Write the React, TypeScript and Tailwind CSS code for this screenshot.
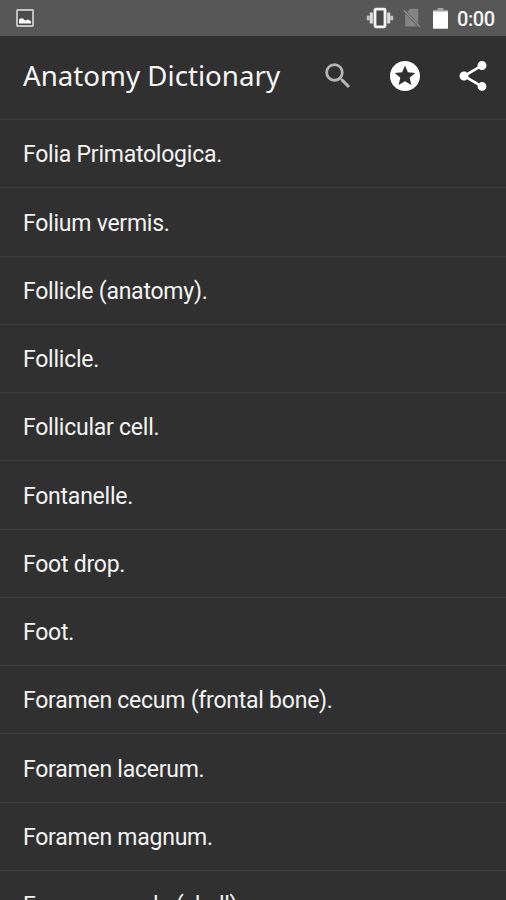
import React from "react";
import { MdSearch, MdShare, MdStars } from "react-icons/md";

const entries = [
  "Folia Primatologica.",
  "Folium vermis.",
  "Follicle (anatomy).",
  "Follicle.",
  "Follicular cell.",
  "Fontanelle.",
  "Foot drop.",
  "Foot.",
  "Foramen cecum (frontal bone).",
  "Foramen lacerum.",
  "Foramen magnum.",
  "Foramen ovale (skull).",
];

function PictureIcon() {
  return (
    <svg width="18" height="18" viewBox="0 0 18 18">
      <rect x="1" y="1" width="16" height="16" rx="0.5" fill="#4b4b4b" stroke="#c4c4c4" strokeWidth="1.9" />
      <path d="M3 14.6v-4l2.2-1.4 1.8.4 2 1.8 3-.8 3 1.6v2.4z" fill="#fff" />
    </svg>
  );
}

function VibrateIcon() {
  return (
    <svg width="28" height="22" viewBox="0 0 28 22">
      <rect x="9" y="2.2" width="10" height="17.6" rx="1" fill="#484848" stroke="#f4f4f4" strokeWidth="2.8" />
      <path d="M3.8 5.5h3v11h-3zM21.2 5.5h3v11h-3z" fill="#dedede" />
      <path d="M.8 8.8h3v4.4h-3zM24.2 8.8h3v4.4h-3z" fill="#c4c4c4" />
    </svg>
  );
}

function NoSimIcon() {
  return (
    <svg width="18" height="20" viewBox="0 0 18 20">
      <path d="M7 .8h8.2v14.6L4.2 4z" fill="#858585" />
      <path d="M2.2 5.4 14.4 18.4H2.2z" fill="#858585" />
      <path d="M.8 2.2 16.8 18.8" stroke="#8d8d8d" strokeWidth="1.4" />
    </svg>
  );
}

function BatteryIcon() {
  return (
    <svg width="15" height="21" viewBox="0 0 15 21">
      <path d="M4.5 0h6v2H15v2H0V2h4.5z" fill="#a3a3a3" />
      <path d="M0 3.4h15V20a.7.7 0 0 1-.7.7H.7A.7.7 0 0 1 0 20z" fill="#fff" />
    </svg>
  );
}

function StatusBar() {
  return (
    <div className="flex h-9 shrink-0 items-center bg-[#575757] pl-4 pr-2.5">
      <PictureIcon />
      <div className="ml-auto flex items-center">
        <VibrateIcon />
        <div className="ml-[9px]">
          <NoSimIcon />
        </div>
        <div className="ml-3">
          <BatteryIcon />
        </div>
        <span className="ml-[9px] w-[39px] pt-px text-[20px] leading-5 font-medium tracking-[-0.4px] text-[#f4f4f4]">
          0:00
        </span>
      </div>
    </div>
  );
}

function Toolbar() {
  return (
    <header className="flex h-[83px] shrink-0 items-center pb-1 pl-[23px] pr-[15px]">
      <h1 className="pb-0.5 font-['Noto_Sans',sans-serif] text-[27.7px] leading-9 whitespace-nowrap text-[#f5f5f5]">
        Anatomy Dictionary
      </h1>
      <div className="ml-auto flex items-center">
        <MdSearch size={34} color="#b5b5b5" className="mr-8" />
        <MdStars size={36} color="#fff" className="mr-8" />
        <MdShare size={36} color="#fff" />
      </div>
    </header>
  );
}

export default function App() {
  return (
    <div className="flex h-[900px] w-[506px] flex-col overflow-hidden bg-[#303030] font-[Roboto,sans-serif]">
      <StatusBar />
      <Toolbar />
      <ul className="min-h-0 flex-1 overflow-hidden">
        {entries.map((entry) => (
          <li
            key={entry}
            className="flex h-[68.25px] items-center border-t border-[#3c3c3c] pl-[23px] pt-1 text-[23px] tracking-[-0.24px] text-[#f3f3f3]"
          >
            {entry}
          </li>
        ))}
      </ul>
    </div>
  );
}
